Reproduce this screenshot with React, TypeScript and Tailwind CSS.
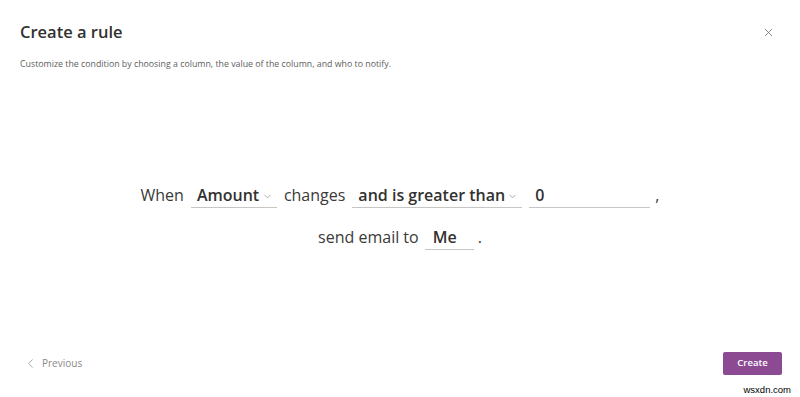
import { ChevronDown, ChevronLeft, X } from 'lucide-react';

function Dropdown({ label, width }: { label: string; width: string }) {
    return (
        <div className={`flex items-center justify-between border-b border-[#c8c6c4] pl-[6px] pr-[4px] h-[26px] ${width}`}>
            <span className="font-semibold text-[#323130]">{label}</span>
            <ChevronDown size={11} strokeWidth={1.5} className="text-[#8a8886] mt-[3px]" />
        </div>
    );
}

export default function App() {
    return (
        <div
            className="w-[800px] h-[397px] bg-white flex flex-col text-[#323130]"
            style={{ fontFamily: '"Open Sans", "Noto Sans", sans-serif' }}
        >
            {/* header */}
            <div className="flex justify-between items-start px-5 pt-[20px]">
                <div>
                    <h1 className="text-[16.5px] font-semibold leading-[24px]">Create a rule</h1>
                    <p className="text-[8.8px] text-[#605e5c] mt-[14px]">
                        Customize the condition by choosing a column, the value of the column, and who to notify.
                    </p>
                </div>
                <button className="mt-[6px] mr-[5px] text-[#605e5c]">
                    <X size={13} strokeWidth={1.3} />
                </button>
            </div>

            {/* sentence */}
            <div className="flex-1 flex flex-col items-center pt-[111px] text-[16px] text-[#3b3a39]">
                <div className="flex items-center gap-[7px] h-[26px]">
                    <span>When</span>
                    <Dropdown label="Amount" width="w-[86px]" />
                    <span>changes</span>
                    <Dropdown label="and is greater than" width="w-[170px]" />
                    <div className="w-[121px] h-[26px] border-b border-[#c8c6c4] pl-[6px] flex items-center">
                        <span className="font-semibold text-[#323130]">0</span>
                    </div>
                    <span className="ml-[-2px]">,</span>
                </div>
                <div className="flex items-center gap-[6px] h-[26px] mt-[16px]">
                    <span>send email to</span>
                    <div className="w-[49px] h-[26px] border-b border-[#c8c6c4] pl-[8px] flex items-center">
                        <span className="font-semibold text-[#323130]">Me</span>
                    </div>
                    <span className="ml-[-2px]">.</span>
                </div>
            </div>

            {/* footer */}
            <div className="flex justify-between items-center px-[23px] h-[34px]">
                <button className="flex items-center gap-[4px] text-[10px] text-[#8a8886]">
                    <ChevronLeft size={15} strokeWidth={1.2} className="text-[#8a8886]" />
                    <span>Previous</span>
                </button>
                <button className="bg-[#8c4a92] text-white text-[9.5px] font-semibold w-[59px] h-[23px] rounded-[2px] mr-[-5px]">
                    Create
                </button>
            </div>
            <div className="h-[17px] flex justify-end items-start pr-[9px] pt-[5px]">
                <span className="text-[9.5px] leading-[10px] text-black" style={{ fontFamily: '"Liberation Sans", sans-serif' }}>wsxdn.com</span>
            </div>
        </div>
    );
}
